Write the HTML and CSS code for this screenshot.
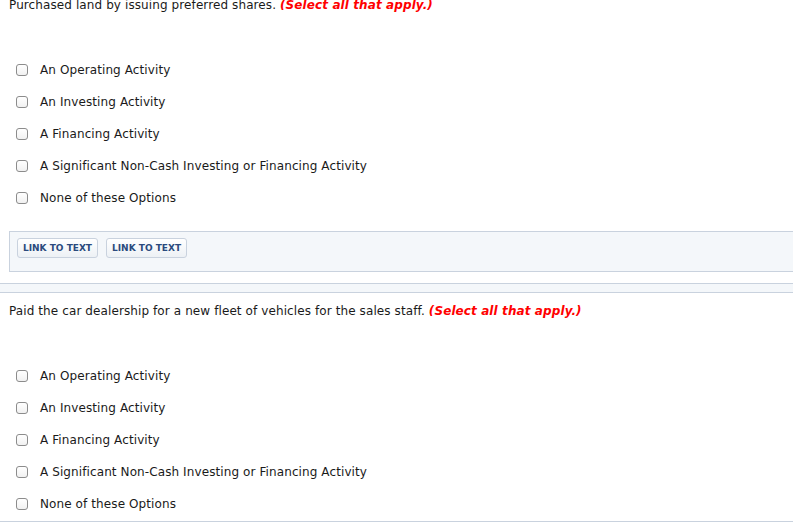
FILE: index.html
```html
<!DOCTYPE html>
<html>
<head>
<meta charset="utf-8">
<link rel="stylesheet" href="styles.css">
</head>
<body>
<div class="page">
  <section class="question">
    <p class="prompt">Purchased land by issuing preferred shares. <em class="hint">(Select all that apply.)</em></p>
    <ul class="options">
      <li class="option"><span class="box"></span><span>An Operating Activity</span></li>
      <li class="option"><span class="box"></span><span>An Investing Activity</span></li>
      <li class="option"><span class="box"></span><span>A Financing Activity</span></li>
      <li class="option"><span class="box"></span><span>A Significant Non-Cash Investing or Financing Activity</span></li>
      <li class="option"><span class="box"></span><span>None of these Options</span></li>
    </ul>
    <div class="links">
      <button class="link-btn">LINK TO TEXT</button>
      <button class="link-btn">LINK TO TEXT</button>
    </div>
  </section>
  <div class="band"></div>
  <section class="question">
    <p class="prompt">Paid the car dealership for a new fleet of vehicles for the sales staff. <em class="hint">(Select all that apply.)</em></p>
    <ul class="options">
      <li class="option"><span class="box"></span><span>An Operating Activity</span></li>
      <li class="option"><span class="box"></span><span>An Investing Activity</span></li>
      <li class="option"><span class="box"></span><span>A Financing Activity</span></li>
      <li class="option"><span class="box"></span><span>A Significant Non-Cash Investing or Financing Activity</span></li>
      <li class="option"><span class="box"></span><span>None of these Options</span></li>
    </ul>
  </section>
  <div class="rule"></div>
</div>
</body>
</html>
```
FILE: styles.css
```css
html, body {
  margin: 0;
  padding: 0;
  background: #fff;
  overflow: hidden;
}
body {
  font-family: "DejaVu Sans", Verdana, sans-serif;
  font-size: 12px;
  letter-spacing: 0.1px;
  color: #1a1a1a;
}
.page {
  margin-top: -3px;
}
.prompt {
  margin: 0;
  padding-left: 9px;
  line-height: 16px;
}
.hint {
  color: #f00;
  font-weight: bold;
  font-style: italic;
}
.options {
  list-style: none;
  margin: 41px 0 0;
  padding: 0;
}
.option {
  display: flex;
  align-items: center;
  gap: 12px;
  height: 32px;
  padding-left: 16px;
  line-height: 16px;
}
.box {
  width: 10px;
  height: 10px;
  border: 1px solid #8c8c8c;
  border-radius: 3px;
  background: linear-gradient(#ffffff, #f1f1f1);
  flex: none;
}
.links {
  margin: 17px -12px 0 9px;
  border: 1px solid #c9d2de;
  background: #f4f7fa;
  display: flex;
  align-items: flex-start;
  gap: 8px;
  padding: 6px 0 0 7px;
  height: 33px;
}
.link-btn {
  height: 20px;
  padding: 0 5px;
  font-family: "DejaVu Sans", Verdana, sans-serif;
  font-size: 9px;
  font-weight: bold;
  letter-spacing: 0;
  color: #2b4a7d;
  border: 1px solid #c9d2de;
  border-radius: 3px;
  background: linear-gradient(#ffffff, #edf1f5);
  line-height: 18px;
}
.band {
  margin-top: 11px;
  height: 8px;
  border-top: 1px solid #c9d2de;
  border-bottom: 1px solid #c9d2de;
  background: #f4f7fa;
}
.band + .question {
  padding-top: 10px;
}
.rule {
  margin-top: 1px;
  height: 0;
  border-top: 1px solid #c9d2de;
}
```
